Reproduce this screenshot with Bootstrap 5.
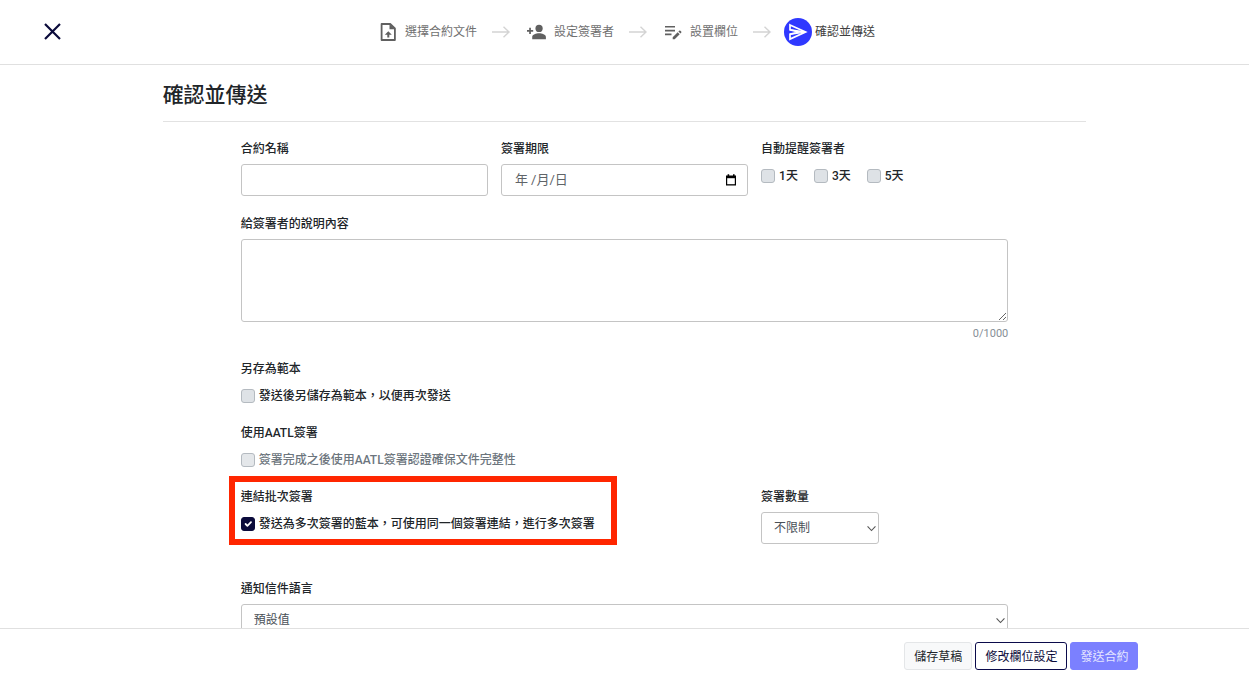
<!DOCTYPE html>
<html lang="zh-Hant">
<head>
<meta charset="utf-8">
<meta name="viewport" content="width=device-width, initial-scale=1">
<title>確認並傳送</title>
<link href="https://cdn.jsdelivr.net/npm/bootstrap@5.3.0/dist/css/bootstrap.min.css" rel="stylesheet">
<style>
  body { font-family: Roboto, "Noto Sans CJK TC", sans-serif; font-size: 12px; line-height: 18px; color: #212529; }
  .container-fluid, .row { --bs-gutter-x: 13px; }
  .topbar { height: 65px; border-bottom: 1px solid #e0e0e0; }
  .close-btn { left: 44px; top: 23px; line-height: 0; }
  .steps { padding-left: 6px; }
  .step { color: #707070; }
  .step svg { fill: #606060; }
  .step.current { color: #404040; gap: 3px; margin-left: -4px; }
  .step-arrow { stroke: #d4d4d4; fill: none; margin: 0 17px 0 15px; }
  .page-body { scrollbar-width: none; min-height: 0; }
  .page-body::-webkit-scrollbar { display: none; }
  .page-title { font-size: 21px; line-height: 32px; font-weight: 500; padding: 14px 0 10px; border-bottom: 1px solid #e2e2e2; margin-bottom: 17px; }
  .field-label { display: block; font-size: 12px; line-height: 20px; font-weight: 500; margin: 0 0 5px; padding: 0; }
  .form-control, .form-select { font-size: 12px; line-height: 18px; padding: 6px 12px; border-color: #c4c4c4; border-radius: 3px; color: #495057; }
  .form-control::placeholder { color: #606468; opacity: 1; }
  .form-select { background-image: url("data:image/svg+xml,%3Csvg xmlns='http://www.w3.org/2000/svg' viewBox='0 0 8 8'%3E%3Cpath fill='none' stroke='%23555' d='M0.5 2.2 4 5.8 7.5 2.2'/%3E%3C/svg%3E"); background-size: 9px 9px; background-position: right 2px center; }
  .date-box { font-size: 13px; padding: 6px 13px; }
  .date-icon { right: 10px; }
  .message { height: 83px; }
  .counter { color: #868e96; font-size: 11px; margin-top: 3px; }
  .tick { display: flex; align-items: center; gap: 4px; font-weight: 500; }
  .tick .form-check-input { flex: none; width: 14px; height: 14px; margin: 0; border: 1px solid #b4bac0; border-radius: 3px; background-color: #dee2e6; }
  .tick .form-check-input:checked { background-color: #0b0b3b; border-color: #0b0b3b; }
  .tick .form-check-input:disabled, .tick .form-check-input:disabled ~ label { opacity: 1; }
  .tick .form-check-input:disabled { background-color: #e4e7ea; }
  .tick .form-check-input:disabled ~ label { color: #6c757d; }
  .section { margin-bottom: 18px; }
  .tick-title { margin-bottom: 8px; }
  .highlight { border: 6px solid #ff2600; inset: -11px auto -12px -12px; width: 388px; pointer-events: none; z-index: 2; }
  .quantity { width: 118px; }
  .language-field { padding-top: 11px; }
  .footbar { height: 55px; border-top: 1px solid #e0e0e0; }
  .actions { gap: 3px; }
  .actions .btn { font-size: 12px; line-height: 18px; padding: 5px 9px 3px; border-radius: 3px; }
  .btn-draft { background: #f8f9fa; border-color: #e4e6e8; color: #212529; }
  .btn-edit { background: #fff; border-color: #0b0b4b; color: #0b0b3b; }
  .btn-send, .btn-send:disabled { background: #7b80ff; border-color: #7b80ff; color: #fff; opacity: 1; }
  .btn-send span { opacity: .8; }
</style>
</head>
<body class="d-flex flex-column vh-100 bg-white overflow-hidden">
<header class="topbar flex-shrink-0 position-relative d-flex align-items-center justify-content-center">
  <button type="button" class="close-btn position-absolute border-0 bg-transparent p-0" aria-label="關閉">
    <svg width="17" height="17" viewBox="0 0 17 17" fill="none" stroke="#0b0b3b" stroke-width="2.2"><path d="M1 1 16 16M16 1 1 16"/></svg>
  </button>
  <nav class="steps d-flex align-items-center" aria-label="步驟">
    <div class="step d-flex align-items-center gap-2">
      <svg width="17" height="18" viewBox="0 0 17 18"><path fill="none" stroke="#606060" stroke-width="1.8" stroke-linejoin="round" d="M1.6 1H10.2L14.9 5.5V17H1.6Z"/><path d="M9.5 1v5.2h5.4zM8.3 8.2 4.8 11.7h2.5v2.8h2v-2.8h2.5z"/></svg>
      <span>選擇合約文件</span>
    </div>
    <svg class="step-arrow" width="18" height="12" viewBox="0 0 18 12" stroke-width="1.4"><path d="M0 6H17M11.5 0.7 17 6 11.5 11.3"/></svg>
    <div class="step d-flex align-items-center gap-2">
      <svg width="19" height="16" viewBox="0 0 20 16"><circle cx="12.7" cy="4.2" r="3.8"/><path d="M5.5 15.5v-2.3c0-2.5 4.2-3.8 7.2-3.8s7.2 1.3 7.2 3.8v2.3zM2.3 3.5h1.8v2.4h2.4v1.8H4.1v2.4H2.3V7.7H0V5.9h2.3z"/></svg>
      <span>設定簽署者</span>
    </div>
    <svg class="step-arrow" width="18" height="12" viewBox="0 0 18 12" stroke-width="1.4"><path d="M0 6H17M11.5 0.7 17 6 11.5 11.3"/></svg>
    <div class="step d-flex align-items-center gap-2">
      <svg width="18" height="16" viewBox="0 0 18 16"><path d="M1 2h10v1.6H1zM1 5.8h10v1.6H1zM1 9.6h6.5v1.6H1zM8.7 13.2l5-5 2 2-5 5h-2zM14.4 7.5l.8-.8q.6-.5 1.2 0l.8.8q.5.6 0 1.2l-.8.8z"/></svg>
      <span>設置欄位</span>
    </div>
    <svg class="step-arrow" width="18" height="12" viewBox="0 0 18 12" stroke-width="1.4"><path d="M0 6H17M11.5 0.7 17 6 11.5 11.3"/></svg>
    <div class="step current d-flex align-items-center" aria-current="step">
      <svg width="28" height="28" viewBox="0 0 28 28"><circle cx="14" cy="14" r="14" fill="#2f38ff"/><path fill="none" stroke="#fff" stroke-width="1.7" d="M6 6.9 21.6 14 6 21.1V16.2L14.5 14 6 11.8Z"/><path fill="none" stroke="#fff" stroke-width="1.5" d="M6 11.8 21 14 6 16.2"/></svg>
      <span>確認並傳送</span>
    </div>
  </nav>
</header>

<main class="page-body flex-grow-1 overflow-auto">
  <div class="container-fluid px-0">
    <div class="row justify-content-center mx-0">
      <div class="col-9">
        <h1 class="page-title">確認並傳送</h1>
        <form class="row" id="send-form">
          <div class="col-10 offset-1">
            <div class="row section">
              <div class="col-4">
                <label class="field-label" for="contract-name">合約名稱</label>
                <input type="text" class="form-control" id="contract-name">
              </div>
              <div class="col-4">
                <label class="field-label" for="deadline">簽署期限</label>
                <div class="position-relative">
                  <input type="text" class="form-control date-box" id="deadline" placeholder="年 /月/日">
                  <svg class="date-icon position-absolute top-50 translate-middle-y" width="14" height="12" viewBox="0 0 14 12" aria-hidden="true"><path d="M2 1.4h1.6V.3h1.6v1.1h3.8V.3h1.6v1.1h1.4v10H2z"/><path fill="#fff" d="M3.2 4.2h7.6v6H3.2z"/></svg>
                </div>
              </div>
              <fieldset class="col-4">
                <legend class="field-label tick-title">自動提醒簽署者</legend>
                <div class="d-flex gap-3">
                  <div class="tick"><input class="form-check-input" type="checkbox" id="day1"><label for="day1">1天</label></div>
                  <div class="tick"><input class="form-check-input" type="checkbox" id="day3"><label for="day3">3天</label></div>
                  <div class="tick"><input class="form-check-input" type="checkbox" id="day5"><label for="day5">5天</label></div>
                </div>
              </fieldset>
            </div>

            <label class="field-label" for="message">給簽署者的說明內容</label>
            <textarea class="form-control message" id="message" maxlength="1000"></textarea>
            <div class="counter text-end mb-3">0/1000</div>

            <div class="section">
              <div class="field-label tick-title">另存為範本</div>
              <div class="tick"><input class="form-check-input" type="checkbox" id="template"><label for="template">發送後另儲存為範本，以便再次發送</label></div>
            </div>

            <div class="section">
              <div class="field-label tick-title">使用AATL簽署</div>
              <div class="tick"><input class="form-check-input" type="checkbox" id="aatl" disabled><label for="aatl">簽署完成之後使用AATL簽署認證確保文件完整性</label></div>
            </div>

            <div class="row align-items-start mb-4">
              <div class="col-8">
                <div class="position-relative">
                  <div class="highlight position-absolute"></div>
                  <div class="field-label tick-title">連結批次簽署</div>
                  <div class="tick"><input class="form-check-input" type="checkbox" id="batch" checked><label for="batch">發送為多次簽署的藍本，可使用同一個簽署連結，進行多次簽署</label></div>
                </div>
              </div>
              <div class="col-4">
                <label class="field-label" for="quantity">簽署數量</label>
                <select class="form-select quantity" id="quantity"><option>不限制</option></select>
              </div>
            </div>

            <div class="language-field">
              <label class="field-label" for="language">通知信件語言</label>
              <select class="form-select" id="language"><option>預設值</option></select>
            </div>
          </div>
        </form>
      </div>
    </div>
  </div>
</main>

<footer class="footbar flex-shrink-0 d-flex align-items-center bg-white">
  <div class="container-fluid px-0">
    <div class="row mx-0">
      <div class="actions col-10 offset-1 d-flex justify-content-end">
        <button type="button" class="btn btn-draft">儲存草稿</button>
        <button type="button" class="btn btn-edit">修改欄位設定</button>
        <button type="submit" form="send-form" class="btn btn-send" disabled><span>發送合約</span></button>
      </div>
    </div>
  </div>
</footer>
<script src="https://cdn.jsdelivr.net/npm/bootstrap@5.3.0/dist/js/bootstrap.bundle.min.js"></script>
</body>
</html>
